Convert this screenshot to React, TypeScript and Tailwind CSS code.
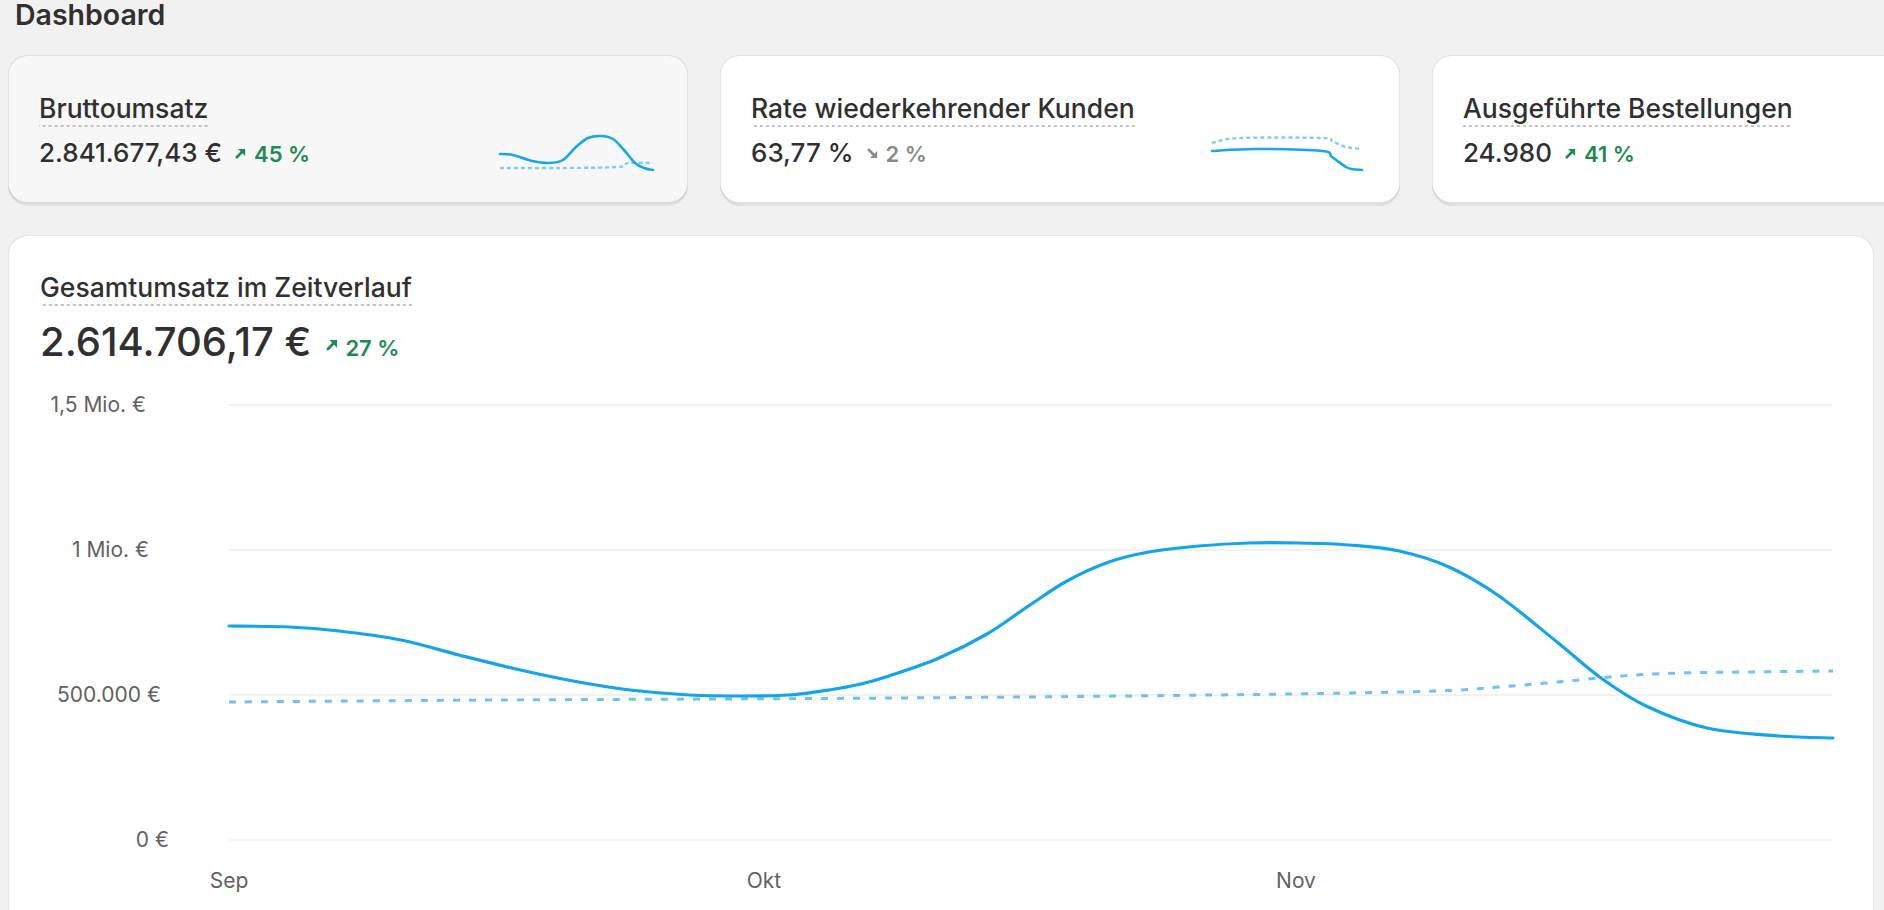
import React from "react";

type Pt = [number, number];

function toPath(pts: Pt[]): string {
  let d = `M${pts[0][0]},${pts[0][1]}`;
  for (let i = 0; i < pts.length - 1; i++) {
    const p0 = pts[i - 1] || pts[i];
    const p1 = pts[i];
    const p2 = pts[i + 1];
    const p3 = pts[i + 2] || p2;
    const c1x = p1[0] + (p2[0] - p0[0]) / 6;
    const c1y = p1[1] + (p2[1] - p0[1]) / 6;
    const c2x = p2[0] - (p3[0] - p1[0]) / 6;
    const c2y = p2[1] - (p3[1] - p1[1]) / 6;
    d += ` C${c1x.toFixed(2)},${c1y.toFixed(2)} ${c2x.toFixed(2)},${c2y.toFixed(2)} ${p2[0]},${p2[1]}`;
  }
  return d;
}

const ArrowUp = ({ className }: { className?: string }) => (
  <svg viewBox="0 0 10 10" className={className} fill="none">
    <path d="M1.6 8.4 L6.6 3.4" stroke="currentColor" strokeWidth="2.3" strokeLinecap="round" />
    <path d="M2.8 0.8 H9.2 V7.2 Z" fill="currentColor" />
  </svg>
);

const ArrowDown = ({ className }: { className?: string }) => (
  <svg viewBox="0 0 10 10" className={className} fill="none">
    <path d="M1.6 1.6 L6.6 6.6" stroke="currentColor" strokeWidth="2.3" strokeLinecap="round" />
    <path d="M9.2 2.8 V9.2 H2.8 Z" fill="currentColor" />
  </svg>
);

type Card = {
  title: string;
  value: string;
  pct: string;
  up: boolean;
  bg: string;
  solid: Pt[];
  dashed: Pt[];
};

const cards: Card[] = [
  {
    title: "Bruttoumsatz",
    value: "2.841.677,43 €",
    pct: "45 %",
    up: true,
    bg: "bg-[#f7f7f7]",
    solid: [[1, 29], [14, 30], [33, 36], [50, 38], [64, 35], [77, 22], [89, 13], [102, 11], [114, 14], [125, 25], [136, 38], [145, 43], [154, 45]],
    dashed: [[1, 43], [60, 43], [119, 42], [129, 38], [154, 38]],
  },
  {
    title: "Rate wiederkehrender Kunden",
    value: "63,77 %",
    pct: "2 %",
    up: false,
    bg: "bg-white",
    solid: [[1, 26], [45, 24], [111, 26], [121, 32], [135, 42], [141, 44], [151, 45]],
    dashed: [[1, 18], [28, 13], [111, 13], [121, 16], [135, 22], [151, 24]],
  },
  {
    title: "Ausgeführte Bestellungen",
    value: "24.980",
    pct: "41 %",
    up: true,
    bg: "bg-white",
    solid: [[1, 30], [40, 28], [80, 20], [110, 18], [130, 30], [151, 40]],
    dashed: [[1, 40], [80, 38], [151, 36]],
  },
];

const cardShadow =
  "shadow-[0_2px_1px_0_rgba(26,26,26,0.07),inset_0_-2px_0_0_rgba(0,0,0,0.12),inset_0_1px_0_0_rgba(204,204,204,0.5),inset_1px_0_0_0_rgba(204,204,204,0.45),inset_-1px_0_0_0_rgba(204,204,204,0.45)]";

const dotted =
  "bg-[linear-gradient(to_right,#c2c2c2_45%,transparent_45%)] bg-[length:6px_2px] bg-bottom bg-repeat-x";

function MetricCard({ c }: { c: Card }) {
  const tone = c.up ? "text-[#1d8a52]" : "text-[#8a8a8a]";
  return (
    <div className={`w-[680px] shrink-0 rounded-[20px] ${c.bg} ${cardShadow} pl-[31px] pr-[34px] pt-[35px] pb-[32px] flex items-end justify-between`}>
      <div className="flex flex-col">
        <div>
          <span className={`inline-block text-[26.5px] font-medium leading-[36px] pb-[1px] text-[#303030] ${dotted}`}>
            {c.title}
          </span>
        </div>
        <div className="mt-[8px] flex items-baseline">
          <span className="text-[26px] font-medium leading-[36px] text-[#303030]">{c.value}</span>
          {c.up ? (
            <ArrowUp className={`self-center ml-[13px] w-[11px] h-[11px] ${tone}`} />
          ) : (
            <ArrowDown className={`self-center ml-[13px] w-[11px] h-[11px] ${tone}`} />
          )}
          <span className={`ml-[8px] text-[22px] font-semibold leading-[36px] ${tone}`}>{c.pct}</span>
        </div>
      </div>
      <svg width="155" height="47" viewBox="0 0 155 47" className="shrink-0 mb-0 overflow-visible">
        <path d={toPath(c.dashed)} fill="none" stroke="#7dcdf1" strokeWidth="2.4" strokeDasharray="4 3" />
        <path d={toPath(c.solid)} fill="none" stroke="#16a6ec" strokeWidth="2.6" strokeLinecap="round" />
      </svg>
    </div>
  );
}

const solidRaw: Pt[] = [
  [230, 626], [290, 627], [340, 631], [402, 640], [460, 655], [517, 669], [574, 681], [631, 690], [690, 695],
  [746, 696], [790, 695], [830, 690], [862, 684], [890, 676], [940, 658], [988, 634], [1028, 607], [1068, 581],
  [1110, 562], [1150, 552], [1200, 546], [1250, 543], [1300, 543], [1350, 545], [1400, 551], [1450, 567],
  [1500, 596], [1558, 642], [1602, 678], [1647, 706], [1708, 728], [1780, 736], [1834, 738],
];

const dashedRaw: Pt[] = [
  [230, 702], [500, 700], [900, 698], [1214, 695], [1402, 692], [1460, 690], [1500, 687], [1559, 682],
  [1622, 676], [1680, 673], [1750, 672], [1834, 671],
];

const solidLine: Pt[] = solidRaw.map(([x, y]) => [x, y - 5] as Pt);
const dashedLine: Pt[] = dashedRaw.map(([x, y]) => [x, y - 5] as Pt);

const gridYs = [400, 545, 690, 835];

export default function App() {
  return (
    <div className="w-[1884px] h-[910px] overflow-hidden bg-[#f1f1f1] font-['Inter',sans-serif] text-[#303030]">
      <div className="pl-2 pr-[10px] pt-px">
        <h1 className="pl-[7px] text-[28.5px] font-semibold leading-[28px] text-[#303030]">Dashboard</h1>

        <div className="mt-[26px] flex gap-8">
          {cards.map((c) => (
            <MetricCard key={c.title} c={c} />
          ))}
        </div>

        <div className={`mt-[31px] h-[720px] rounded-[20px] bg-white ${cardShadow}`}>
          <div className="pl-[32px] pt-[34px]">
            <span className={`inline-block text-[26.5px] font-medium leading-[36px] pb-[1px] ${dotted}`}>
              Gesamtumsatz im Zeitverlauf
            </span>
            <div className="mt-[12px] flex items-baseline">
              <span className="text-[40px] font-medium leading-[48px]">2.614.706,17 €</span>
              <ArrowUp className="self-center ml-[15px] w-[12px] h-[12px] text-[#1d8a52]" />
              <span className="ml-[7px] text-[22px] font-semibold leading-[48px] text-[#1d8a52]">27 %</span>
            </div>
          </div>

          <div className="relative mt-[13px] h-[530px]">
            <svg className="absolute left-0 top-0" width="1864" height="530" viewBox="9 380 1864 530">
              {gridYs.map((y) => (
                <line key={y} x1="230" x2="1833" y1={y} y2={y} stroke="#ececec" strokeWidth="1.6" />
              ))}
              <path d={toPath(dashedLine)} fill="none" stroke="#6cc4ee" strokeWidth="3" strokeDasharray="7 9" />
              <path d={toPath(solidLine)} fill="none" stroke="#13a4eb" strokeWidth="3.2" strokeLinecap="round" />
            </svg>

            <div className="absolute left-0 top-[8px] w-[138px] text-right text-[21px] leading-[24px] text-[#616161]">1,5 Mio. €</div>
            <div className="absolute left-0 top-[153px] w-[141px] text-right text-[21px] leading-[24px] text-[#616161]">1 Mio. €</div>
            <div className="absolute left-0 top-[298px] w-[153px] text-right text-[21px] leading-[24px] text-[#616161]">500.000 €</div>
            <div className="absolute left-0 top-[443px] w-[161px] text-right text-[21px] leading-[24px] text-[#616161]">0 €</div>

            <div className="absolute left-[221px] top-[484px] -translate-x-1/2 text-[21px] leading-[24px] text-[#616161]">Sep</div>
            <div className="absolute left-[756px] top-[484px] -translate-x-1/2 text-[21px] leading-[24px] text-[#616161]">Okt</div>
            <div className="absolute left-[1288px] top-[484px] -translate-x-1/2 text-[21px] leading-[24px] text-[#616161]">Nov</div>
          </div>
        </div>
      </div>
    </div>
  );
}
